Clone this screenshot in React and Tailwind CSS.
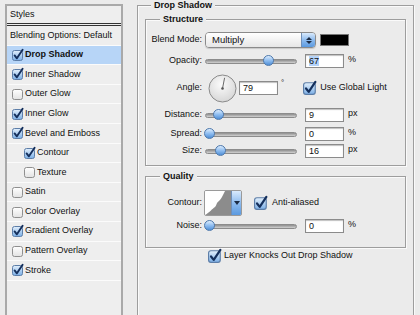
import React from 'react';

const styles = [
  { label: 'Drop Shadow', on: true, selected: true },
  { label: 'Inner Shadow', on: true },
  { label: 'Outer Glow', on: false },
  { label: 'Inner Glow', on: true },
  { label: 'Bevel and Emboss', on: true },
  { label: 'Contour', on: true, indent: true },
  { label: 'Texture', on: false, indent: true },
  { label: 'Satin', on: false },
  { label: 'Color Overlay', on: false },
  { label: 'Gradient Overlay', on: true },
  { label: 'Pattern Overlay', on: false },
  { label: 'Stroke', on: true },
];

function Check({ on, big }) {
  const s = big ? 14 : 12;
  return (
    <svg width={s} height={s} viewBox="0 0 12 12" className="shrink-0 overflow-visible">
      <rect
        x="0.5"
        y="1.5"
        width="10"
        height="10"
        rx="2"
        fill={on ? 'url(#cbOn)' : 'url(#cbOff)'}
        stroke={on ? '#5d7ea8' : '#8f8f8f'}
      />
      {on && (
        <path
          d="M2.6 6.4 L4.9 9.3 L10.6 0.8"
          fill="none"
          stroke="#142f5c"
          strokeWidth="1.9"
          strokeLinecap="round"
          strokeLinejoin="round"
        />
      )}
    </svg>
  );
}

function Slider({ at }) {
  return (
    <div className="relative w-[92px] h-[14px] flex items-center shrink-0">
      <div className="w-full h-[5px] rounded-full border border-[#8c8c8c] bg-linear-to-b from-[#8e8e8e] to-[#d2d2d2]"></div>
      <div
        className="absolute top-[1px] w-[11px] h-[11px] rounded-full border border-[#4d78ac] bg-linear-to-b from-[#dcecfc] via-[#8fbdf0] to-[#4f8fd6]"
        style={{ left: at - 5 }}
      ></div>
    </div>
  );
}

function Field({ value, sel, w = 'w-[39px]' }) {
  return (
    <div className={`${w} h-[14px] shrink-0 bg-white border border-[#8b8b8b] shadow-[inset_0_1px_1px_rgba(0,0,0,0.25)] pl-[3px] text-[9px] leading-[12px]`}>
      <span className={sel ? 'bg-[#b3d3fb]' : ''}>{value}</span>
    </div>
  );
}

function Label({ children }) {
  return <div className="w-[57px] shrink-0 pr-[1px] text-right text-[9px]">{children}</div>;
}

function SliderRow({ label, at, value, unit, sel, className }) {
  return (
    <div className={`flex items-center h-[14px] ${className}`}>
      <Label>{label}</Label>
      <div className="ml-[2px]">
        <Slider at={at} />
      </div>
      <div className="ml-[8px]">
        <Field value={value} sel={sel} />
      </div>
      <div className="ml-[4px] self-start text-[9px] leading-[11px]">{unit}</div>
    </div>
  );
}

function Legend({ children, className }) {
  return (
    <legend className={`px-[3px] text-[9px] font-bold leading-[11px] bg-[#ebebeb] ${className}`}>{children}</legend>
  );
}

export default function App() {
  return (
    <div className="w-[420px] h-[315px] overflow-hidden bg-[#ebebeb] flex items-start font-['Liberation_Sans',Arial,sans-serif] text-[#111]">
      <svg width="0" height="0" className="absolute">
        <defs>
          <linearGradient id="cbOn" x1="0" y1="0" x2="0" y2="1">
            <stop offset="0%" stopColor="#e3f0fc" />
            <stop offset="100%" stopColor="#7aaee6" />
          </linearGradient>
          <linearGradient id="cbOff" x1="0" y1="0" x2="0" y2="1">
            <stop offset="0%" stopColor="#ffffff" />
            <stop offset="100%" stopColor="#e2e2e2" />
          </linearGradient>
          <radialGradient id="dial" cx="0.45" cy="0.35" r="0.7">
            <stop offset="0%" stopColor="#fbfbfb" />
            <stop offset="100%" stopColor="#d4d4d4" />
          </radialGradient>
        </defs>
      </svg>

      {/* Styles list */}
      <div className="ml-[5px] mt-[4px] w-[118px] h-[330px] shrink-0 border-2 border-[#a9a9a9] bg-[#eeeeee]">
        <div className="h-[20px] pl-[3px] flex items-center text-[9px] border-b-[3px] border-double border-[#333]">Styles</div>
        <div className="h-[19.6px] pl-[3px] flex items-center text-[9px] border-b border-[#fbfbfb]">Blending Options: Default</div>
        {styles.map((s) => (
          <div
            key={s.label}
            className={`h-[19.6px] flex items-center gap-[1px] text-[9px] border-b border-[#fbfbfb] ${s.indent ? 'pl-[17px]' : 'pl-[5px]'} ${s.selected ? 'bg-[#b7d5f7] font-bold' : ''}`}
          >
            <Check on={s.on} />
            <span>{s.label}</span>
          </div>
        ))}
      </div>

      {/* Drop Shadow panel */}
      <fieldset className="ml-[14px] w-[277px] h-[330px] shrink-0 border border-[#9d9d9d] px-[7px] shadow-[inset_1px_1px_0_#fafafa,1px_1px_0_#fafafa]">
        <Legend className="ml-[6px]">Drop Shadow</Legend>

        <fieldset className="mt-[3px] border border-[#9d9d9d] pt-[7px] pb-[7px] shadow-[inset_1px_1px_0_#fafafa,1px_1px_0_#fafafa]">
          <Legend className="ml-[14px]">Structure</Legend>

          <div className="flex items-center h-[16px]">
            <Label>Blend Mode:</Label>
            <div className="ml-[2px] w-[111px] h-[16px] flex rounded-[4px] border border-[#8a8a8a] overflow-hidden shadow-[0_1px_1px_rgba(0,0,0,0.15)]">
              <div className="flex-1 bg-linear-to-b from-white to-[#e6e6e6] pl-[6px] text-[9.5px] leading-[14px]">Multiply</div>
              <div className="w-[14px] border-l border-[#6f8fb8] bg-linear-to-b from-[#d9eafc] via-[#8dbbee] to-[#5b9ae0] flex flex-col items-center justify-center gap-[1px]">
                <svg width="6" height="3" viewBox="0 0 6 3"><path d="M0 3 L3 0 L6 3 Z" fill="#1b2b44" /></svg>
                <svg width="6" height="3" viewBox="0 0 6 3"><path d="M0 0 L3 3 L6 0 Z" fill="#1b2b44" /></svg>
              </div>
            </div>
            <div className="ml-[4px] w-[29px] h-[12px] bg-black border border-[#777]"></div>
          </div>

          <SliderRow className="mt-[6px]" label="Opacity:" at={63} value="67" unit="%" sel />

          <div className="mt-[6px] flex items-center h-[28px]">
            <Label>Angle:</Label>
            <svg width="29" height="29" viewBox="0 0 29 29" className="ml-[5px] shrink-0">
              <circle cx="14.5" cy="14.5" r="13.5" fill="url(#dial)" stroke="#8a8a8a" />
              <line x1="14.5" y1="14.5" x2="16.6" y2="3.8" stroke="#6a6a6a" strokeWidth="1" />
              <circle cx="14.5" cy="14.5" r="1.3" fill="#555" />
            </svg>
            <div className="ml-[2px]">
              <Field value="79" />
            </div>
            <div className="ml-[3px] self-start mt-[5px] text-[8px] leading-[8px]">°</div>
            <div className="ml-[19px] flex items-center gap-[3px]">
              <Check on big />
              <span className="text-[9px]">Use Global Light</span>
            </div>
          </div>

          <SliderRow className="mt-[6px]" label="Distance:" at={13} value="9" unit="px" />
          <SliderRow className="mt-[5px]" label="Spread:" at={4} value="0" unit="%" />
          <SliderRow className="mt-[3px]" label="Size:" at={15} value="16" unit="px" />
        </fieldset>

        <fieldset className="mt-[5px] border border-[#9d9d9d] pt-[8px] pb-[14px] shadow-[inset_1px_1px_0_#fafafa,1px_1px_0_#fafafa]">
          <Legend className="ml-[14px]">Quality</Legend>

          <div className="flex items-center h-[26px]">
            <Label>Contour:</Label>
            <div className="ml-[1px] h-[26px] flex rounded-[2px] border border-[#9a9a9a] overflow-hidden">
              <svg width="26" height="24" viewBox="0 0 26 24" className="bg-white">
                <path d="M0 24 C5 21 7 18 10 16 C12 14 11 12 14 10 C16 8 17 6 18 4 L20 0 L26 0 L26 24 Z" fill="#8c8c8c" />
              </svg>
              <div className="w-[10px] bg-linear-to-b from-[#d9eafc] via-[#8dbbee] to-[#5b9ae0] border-l border-[#6f8fb8] flex items-center justify-center">
                <svg width="6" height="4" viewBox="0 0 6 4"><path d="M0 0 L3 4 L6 0 Z" fill="#1b2b44" /></svg>
              </div>
            </div>
            <div className="ml-[12px] flex items-center gap-[4px]">
              <Check on big />
              <span className="text-[9px]">Anti-aliased</span>
            </div>
          </div>

          <SliderRow className="mt-[3px]" label="Noise:" at={4} value="0" unit="%" />
        </fieldset>

        <div className="mt-[1px] h-[14px] pl-[63px] flex items-center gap-[2px]">
          <Check on big />
          <span className="text-[9px]">Layer Knocks Out Drop Shadow</span>
        </div>
      </fieldset>
    </div>
  );
}
